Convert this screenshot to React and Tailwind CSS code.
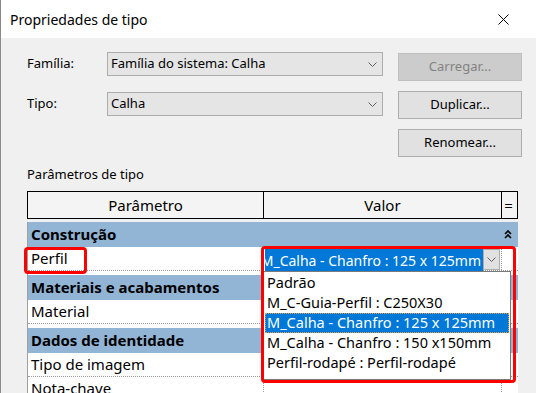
const Chevron = () => (
  <svg width="9" height="5" viewBox="0 0 9 5" className="text-[#606060]">
    <path d="M0.5 0.5 L4.5 4.5 L8.5 0.5" fill="none" stroke="currentColor" strokeWidth="1" />
  </svg>
);

const DoubleUp = () => (
  <svg width="8" height="9" viewBox="0 0 8 9">
    <path d="M1 4 L4 1 L7 4 M1 8 L4 5 L7 8" fill="none" stroke="#000" strokeWidth="1.6" />
  </svg>
);

const SelectBox = ({ value }) => (
  <div className="w-[276px] h-[24px] bg-[#e5e5e5] border border-[#adadad] flex items-center justify-between pl-[3px] pr-[5px]">
    <span>{value}</span>
    <Chevron />
  </div>
);

const Button = ({ children, disabled }) => (
  <div
    className={
      disabled
        ? "w-[124px] h-[28px] bg-[#cccccc] border border-[#bfbfbf] text-[#838383] flex items-center justify-center"
        : "w-[124px] h-[28px] bg-[#e1e1e1] border border-[#adadad] flex items-center justify-center"
    }
  >
    {children}
  </div>
);

const GroupRow = ({ label, first, collapse }) => (
  <div
    className={
      (first ? "mt-[3px] " : "mt-[4px] ") +
      "h-[25px] bg-[#92b4d5] flex items-center justify-between pl-[3px] pr-[6px] font-bold"
    }
  >
    <span>{label}</span>
    {collapse && <DoubleUp />}
  </div>
);

const Row = ({ label, children }) => (
  <div className="h-[24px] flex border-b border-dotted border-[#9a9a9a]">
    <div className="w-[235px] pl-[3px] flex items-center">{label}</div>
    <div className="w-[238px] border-l border-dotted border-[#9a9a9a]">{children}</div>
    <div className="w-[15px] border-l border-dotted border-[#9a9a9a]"></div>
  </div>
);

const options = [
  "Padrão",
  "M_C-Guia-Perfil : C250X30",
  "M_Calha - Chanfro : 125 x 125mm",
  "M_Calha - Chanfro : 150 x150mm",
  "Perfil-rodapé : Perfil-rodapé",
];

export default function App() {
  return (
    <div className="w-[536px] h-[393px] overflow-hidden bg-[#f0f0f0] border-l border-[#8a8a8a] text-black font-['Noto_Sans',sans-serif]">
      {/* title bar */}
      <div className="h-[38px] bg-white flex items-center justify-between pl-[9px] pr-[27px]">
        <span className="text-[14px]">Propriedades de tipo</span>
        <svg width="11" height="11" viewBox="0 0 11 11">
          <path d="M0.5 0.5 L10.5 10.5 M10.5 0.5 L0.5 10.5" stroke="#000" strokeWidth="1" />
        </svg>
      </div>

      <div className="pl-[26px] text-[13px]">
        {/* Família */}
        <div className="mt-[14px] flex items-start">
          <div className="w-[80px] h-[24px] flex items-center">Família:</div>
          <SelectBox value="Família do sistema: Calha" />
          <div className="ml-[15px] mt-[1px]">
            <Button disabled>Carregar...</Button>
          </div>
        </div>

        {/* Tipo */}
        <div className="mt-[10px] flex items-start">
          <div className="w-[80px] h-[24px] mt-[1px] flex items-center">Tipo:</div>
          <div className="mt-[1px]">
            <SelectBox value="Calha" />
          </div>
          <div className="ml-[15px]">
            <Button>Duplicar...</Button>
          </div>
        </div>

        <div className="mt-[10px] pl-[371px]">
          <Button>Renomear...</Button>
        </div>

        <div className="mt-[9px] h-[18px] flex items-center">Parâmetros de tipo</div>

        {/* table */}
        <div className="relative mt-[7px] w-[491px] text-[15px]">
          <div className="flex h-[28px] border border-black bg-[#f4f4f4]">
            <div className="w-[235px] flex items-center justify-center">Parâmetro</div>
            <div className="w-[238px] border-l border-black flex items-center justify-center">Valor</div>
            <div className="w-[14px] border-l border-black flex items-center justify-center">=</div>
          </div>

          <div className="bg-white border-l border-[#a0a0a0] h-[200px]">
            <GroupRow label="Construção" first collapse />
            <Row label="Perfil">
              <div className="flex h-full pt-[2px] pl-[1px] pr-[1px]">
                <div className="w-[218px] h-[22px] bg-[#0078d7] text-white text-[14px] overflow-hidden whitespace-nowrap flex justify-end items-center">
                  <span className="pr-[2px]">M_Calha - Chanfro : 125 x 125mm</span>
                </div>
                <div className="w-[17px] h-[21px] bg-[#e1e1e1] border border-[#adadad] flex items-center justify-center">
                  <Chevron />
                </div>
              </div>
            </Row>
            <GroupRow label="Materiais e acabamentos" />
            <Row label="Material" />
            <GroupRow label="Dados de identidade" />
            <Row label="Tipo de imagem" />
            <Row label="Nota-chave" />
          </div>

          {/* dropdown list */}
          <div className="absolute left-[236px] top-[80px] w-[248px] h-[109px] bg-white border border-[#7a7a7a] p-[1px] text-[14.5px]">
            {options.map((o, i) => (
              <div
                key={o}
                className={
                  i === 2
                    ? "h-[20px] pl-[1px] flex items-center whitespace-nowrap bg-[#0078d7] text-white border border-dotted border-[#e0a050]"
                    : "h-[20px] pl-[2px] flex items-center whitespace-nowrap"
                }
              >
                {o}
              </div>
            ))}
          </div>

          {/* red highlights */}
          <div className="absolute left-[-3px] top-[56px] w-[63px] h-[27px] border-[3px] border-[#ff0000] rounded-[4px]"></div>
          <div className="absolute left-[234px] top-[55px] w-[255px] h-[137px] border-[3px] border-[#ff0000] rounded-[4px]"></div>
        </div>
      </div>
    </div>
  );
}
